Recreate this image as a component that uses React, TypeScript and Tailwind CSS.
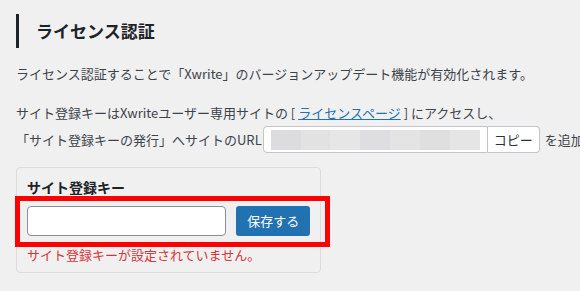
import React from 'react'

const blur = ['bg-[#dcdcde]', 'bg-[#e2e2e3]', 'bg-[#e6e6e7]', 'bg-[#dedee0]', 'bg-[#e4e4e5]', 'bg-[#dfdfe0]', 'bg-[#e5e5e6]']

const App = () => {
  return (
    <div className="w-[580px] h-[291px] overflow-hidden bg-[#f0f0f1] text-[#3c434a] text-[13px] font-['Noto_Sans_CJK_JP','Noto_Sans',sans-serif]">
      <div className="pl-4 pt-[14px]">
        <h2 className="h-[34px] flex items-center border-l-[3px] border-[#1d2327] pl-[17px] text-[17px] font-bold text-[#1d2327]">
          ライセンス認証
        </h2>

        <p className="mt-4 leading-5 whitespace-nowrap">
          ライセンス認証することで「Xwrite」のバージョンアップデート機能が有効化されます。
        </p>

        <p className="mt-[19px] leading-5 whitespace-nowrap">
          サイト登録キーはXwriteユーザー専用サイトの [ <a className="text-[#2271b1] underline">ライセンスページ</a> ] にアクセスし、
        </p>

        <div className="mt-[3px] flex items-center whitespace-nowrap">
          <span className="leading-5">「サイト登録キーの発行」へサイトのURL</span>
          <div className="ml-px flex h-[27px]">
            <div className="w-[225px] flex items-center px-[7px] bg-white border border-[#c3c4c7] rounded-l-[4px]">
              <div className="flex h-[20px] w-[210px]">
                {blur.map((c, i) => (
                  <div key={i} className={`flex-1 ${c}`} />
                ))}
              </div>
            </div>
            <button className="w-[52px] bg-white border border-l-0 border-[#c3c4c7] rounded-r-[4px] text-[#2c3338] text-[13px]">
              コピー
            </button>
          </div>
          <span className="ml-[5px] leading-5">を追加してください。</span>
        </div>

        <div className="relative mt-[14px] w-[305px] h-[106px] border border-[#dcdcde] rounded-[4px] px-[10px] pt-[9px]">
          <h3 className="leading-5 text-[14px] font-bold text-[#1d2327]">サイト登録キー</h3>
          <div className="mt-[9px] flex">
            <input className="w-[200px] h-[30px] bg-white border border-[#8c8f94] rounded-[4px] px-2 outline-none" />
            <button className="ml-[10px] w-[74px] h-[30px] rounded-[3px] bg-[#2271b1] text-white text-[13px]">
              保存する
            </button>
          </div>
          <p className="mt-[9px] leading-5 text-[#d63638] whitespace-nowrap">
            サイト登録キーが設定されていません。
          </p>
          <div className="absolute left-[-2px] top-[28px] w-[315px] h-[51px] border-[5px] border-[#ff0000] pointer-events-none" />
        </div>
      </div>
    </div>
  )
}

export default App
